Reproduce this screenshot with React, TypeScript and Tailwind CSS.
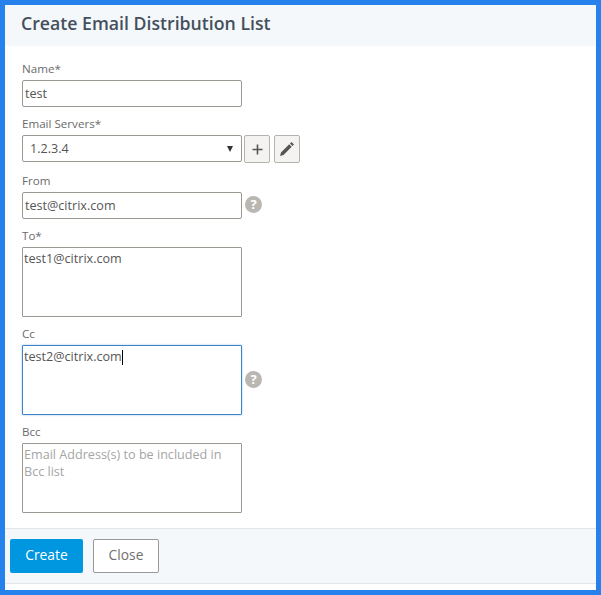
import React from "react";

const font = { fontFamily: '"Open Sans", sans-serif' };

function Label({ children }: { children: React.ReactNode }) {
  return <div className="h-[20px] pb-[3px] text-[11.6px] leading-[17px] text-[#6b6b6b]">{children}</div>;
}

function Help() {
  return (
    <span className="mb-[2px] flex h-[17px] w-[17px] items-center justify-center rounded-full bg-[#bab7b3] text-[13px] leading-none font-bold text-white">
      ?
    </span>
  );
}

const inputBox = "h-[27px] w-[220px] rounded-[2px] border border-[#9a9891] bg-white pt-[1px]";
const areaBox = "h-[70px] w-[220px] rounded-[1px] border bg-white pl-[1px] pr-[2px] pt-[2px] text-[12.6px] leading-[17px]";

export default function App() {
  return (
    <div style={font} className="flex h-[595px] w-[601px] flex-col border-[5px] border-[#2581eb] bg-white">
      <header className="flex h-[41px] items-center bg-[#f4f8fb] pb-[5px] pl-[16px] text-[17.7px] font-semibold text-[#44505c]">
        Create Email Distribution List
      </header>
      <main className="flex flex-1 flex-col pl-[17px] pt-[14px]">
        <Label>Name*</Label>
        <div className={`${inputBox} flex items-center px-[2px] text-[12.6px] text-[#555]`}>test</div>

        <div className="mt-[8px]"><Label>Email Servers*</Label></div>
        <div className="flex h-[27px] items-start gap-[2px]">
          <div className={`${inputBox} flex items-center justify-between pl-[7px] pr-[8px] text-[12.6px] text-[#555]`}>
            <span>1.2.3.4</span>
            <span className="h-0 w-0 border-x-[3.5px] border-t-[6px] border-x-transparent border-t-[#333]" />
          </div>
          <button className="flex h-[28px] w-[26px] items-center justify-center rounded-[2px] border border-[#b5b3ae] bg-[#f4f3f1]">
            <svg width="13" height="13" viewBox="0 0 13 13"><path d="M6.5 1.5v10M1.5 6.5h10" stroke="#555" strokeWidth="1.6" /></svg>
          </button>
          <button className="ml-[2px] flex h-[28px] w-[26px] items-center justify-center rounded-[2px] border border-[#b5b3ae] bg-[#f4f3f1]">
            <svg width="16" height="16" viewBox="0 0 16 16"><path d="M1 15l1-3.5 8.2-8.2 2.5 2.5L4.5 14zM11 2.5l1.5-1.5 2.5 2.5-1.5 1.5z" fill="#555" /></svg>
          </button>
        </div>

        <div className="mt-[10px]"><Label>From</Label></div>
        <div className="flex items-center gap-[3px]">
          <div className={`${inputBox} flex items-center px-[2px] text-[12.6px] text-[#555]`}>test@citrix.com</div>
          <Help />
        </div>

        <div className="mt-[8px]"><Label>To*</Label></div>
        <div className={`${areaBox} border-[#9a9891] text-[#555]`}>test1@citrix.com</div>

        <div className="mt-[8px]"><Label>Cc</Label></div>
        <div className="flex items-center gap-[3px]">
          <div className={`${areaBox} border-[#3d85c6] text-[#555] shadow-[0_0_2px_#8fbce6]`}>
            test2@citrix.com<span className="inline-block h-[15px] w-px bg-black align-middle" />
          </div>
          <Help />
        </div>

        <div className="mt-[8px]"><Label>Bcc</Label></div>
        <div className={`${areaBox} border-[#9a9891] text-[#a5a5a5]`}>Email Address(s) to be included in Bcc list</div>
      </main>
      <footer className="flex h-[56px] items-center gap-[10px] border-y border-[#e3e5e7] bg-[#f4f8fb] pl-[5px]">
        <button className="h-[34px] w-[73px] rounded-[2px] bg-[#0096e0] pb-[2px] text-[13.8px] text-white">Create</button>
        <button className="h-[34px] w-[66px] rounded-[2px] border border-[#999] bg-white pb-[2px] text-[13.8px] text-[#707070]">Close</button>
      </footer>
      <div className="h-[6px] bg-white" />
    </div>
  );
}
